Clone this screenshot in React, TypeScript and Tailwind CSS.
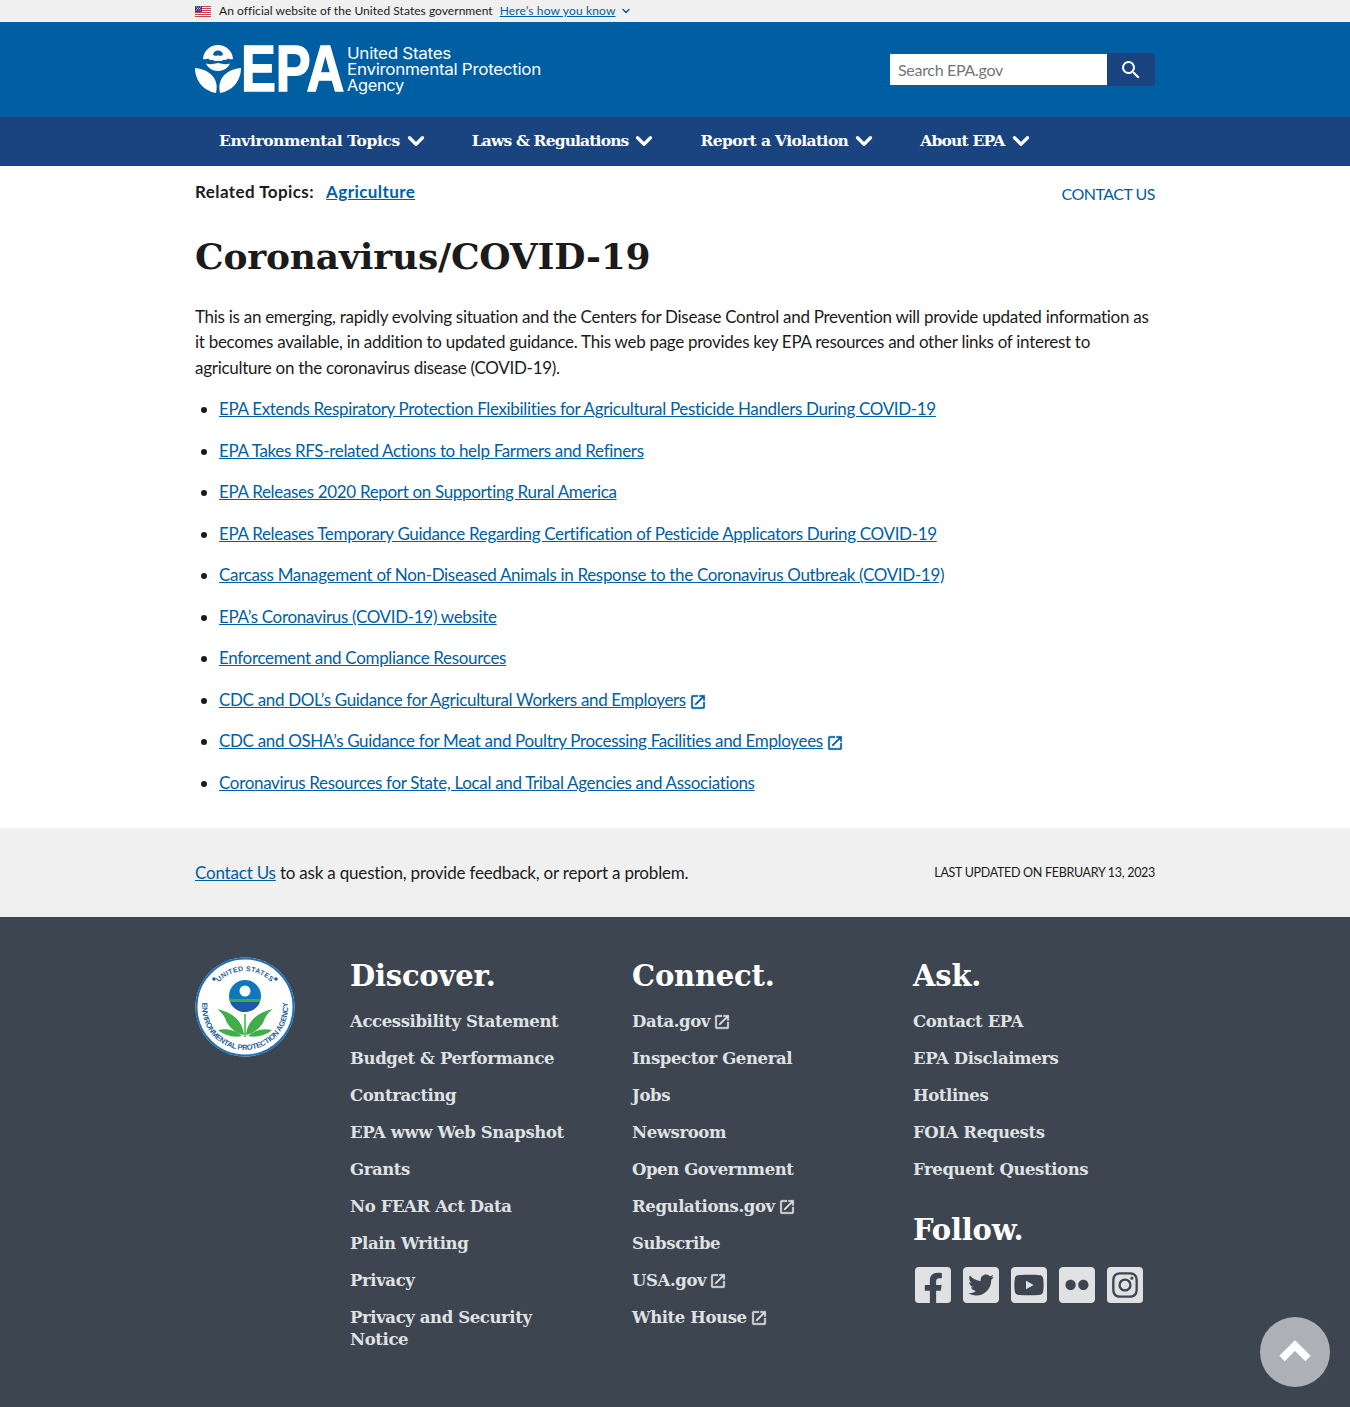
import { ChevronDown, ChevronUp } from 'lucide-react';
import { FaFacebookSquare, FaFlickr, FaInstagramSquare, FaTwitterSquare, FaYoutubeSquare } from 'react-icons/fa';
import { MdSearch } from 'react-icons/md';

const NAV_ITEMS = [
  { label: 'Environmental Topics', className: 'tracking-[-0.4px]' },
  { label: 'Laws & Regulations', className: 'tracking-[-0.85px]' },
  { label: 'Report a Violation', className: 'tracking-[-0.6px]' },
  { label: 'About EPA', className: 'tracking-[-0.8px]' },
];

const LINKS = [
  { label: 'EPA Extends Respiratory Protection Flexibilities for Agricultural Pesticide Handlers During COVID-19' },
  { label: 'EPA Takes RFS-related Actions to help Farmers and Refiners' },
  { label: 'EPA Releases 2020 Report on Supporting Rural America' },
  { label: 'EPA Releases Temporary Guidance Regarding Certification of Pesticide Applicators During COVID-19' },
  { label: 'Carcass Management of Non-Diseased Animals in Response to the Coronavirus Outbreak (COVID-19)' },
  { label: 'EPA’s Coronavirus (COVID-19) website' },
  { label: 'Enforcement and Compliance Resources' },
  { label: 'CDC and DOL’s Guidance for Agricultural Workers and Employers', external: true },
  { label: 'CDC and OSHA’s Guidance for Meat and Poultry Processing Facilities and Employees', external: true },
  { label: 'Coronavirus Resources for State, Local and Tribal Agencies and Associations' },
];

const DISCOVER = [
  { label: 'Accessibility Statement' },
  { label: 'Budget & Performance' },
  { label: 'Contracting' },
  { label: 'EPA www Web Snapshot' },
  { label: 'Grants' },
  { label: 'No FEAR Act Data' },
  { label: 'Plain Writing' },
  { label: 'Privacy' },
  { label: 'Privacy and Security Notice' },
];

const CONNECT = [
  { label: 'Data.gov', external: true },
  { label: 'Inspector General' },
  { label: 'Jobs' },
  { label: 'Newsroom' },
  { label: 'Open Government' },
  { label: 'Regulations.gov', external: true },
  { label: 'Subscribe' },
  { label: 'USA.gov', external: true },
  { label: 'White House', external: true },
];

const ASK = [
  { label: 'Contact EPA' },
  { label: 'EPA Disclaimers' },
  { label: 'Hotlines' },
  { label: 'FOIA Requests' },
  { label: 'Frequent Questions' },
];

type FooterLink = { label: string; external?: boolean };

function UsFlag() {
  return (
    <svg width="16" height="11" viewBox="0 0 16 11" className="shrink-0">
      <rect width="16" height="11" fill="#fff" />
      <path d="M0 .5h16M0 2.5h16M0 4.5h16M0 6.5h16M0 8.5h16M0 10.5h16" stroke="#c9434f" strokeWidth="1" />
      <rect width="7" height="6" fill="#3b3b80" />
      <path d="M1 1h1M3 1h1M5 1h1M2 2.5h1M4 2.5h1M1 4h1M3 4h1M5 4h1" stroke="#fff" strokeWidth=".7" />
    </svg>
  );
}

function LaunchIcon({ className }: { className: string }) {
  return (
    <svg viewBox="0 0 24 24" fill="currentColor" stroke="currentColor" strokeWidth=".5" className={className}>
      <path d="M19 19H5V5h7V3H5a2 2 0 0 0-2 2v14a2 2 0 0 0 2 2h14a2 2 0 0 0 2-2v-7h-2v7ZM14 3v2h3.590l-9.830 9.830 1.410 1.410L19 6.410V10h2V3h-7Z" />
    </svg>
  );
}

function EpaLogo() {
  return (
    <svg width="347" height="50" viewBox="0 0 347 50">
      {/* 花形标志 */}
      <path
        fill="#fff"
        d="M23 0a15 15 0 0 1 15 14c-2 .5-4 .2-5.500-.6-.8 1.400-2.500 2.100-4 1.300-1.400 1.300-3.600 1.600-5.500 1-1.900.6-4.100.3-5.500-1-1.500.8-3.200.1-4-1.300-1.500.8-3.500 1.100-5.500.6A15 15 0 0 1 23 0Zm0 5.500a5.200 5.200 0 0 0-5 4.500c1.500 1 3.400 1.100 5 .2 1.600.9 3.500.8 5-.2a5.200 5.200 0 0 0-5-4.500Z"
      />
      <path fill="#fff" d="M11 18.500c3.600 1 7.500.8 12-.5 4.500 1.300 8.400 1.500 12 .5-1.800 4.500-6.500 7.500-12 7.500s-10.200-3-12-7.500Z" />
      <path fill="#fff" d="M0 23c10 .5 20 6.500 21.500 16.500.4 3 0 6-.5 8.500C9 46 0 36 0 23Z" />
      <path fill="#fff" d="M46 23c-10 .5-20 6.500-21.500 16.500-.4 3 0 6 .5 8.500 12-2 21-12 21-25Z" />
      <text
        x="46"
        y="46"
        textLength="103"
        lengthAdjust="spacingAndGlyphs"
        fill="#fff"
        stroke="#fff"
        strokeWidth="1.400"
        fontFamily="Liberation Sans, sans-serif"
        fontWeight="700"
        fontSize="64"
      >
        EPA
      </text>
      <g fill="#fff" fontFamily="Inter, sans-serif" fontSize="16">
        <text x="152" y="14" textLength="104" lengthAdjust="spacingAndGlyphs">United States</text>
        <text x="152" y="30" textLength="194" lengthAdjust="spacingAndGlyphs">Environmental Protection</text>
        <text x="152" y="46" textLength="57" lengthAdjust="spacingAndGlyphs">Agency</text>
      </g>
    </svg>
  );
}

function EpaSeal() {
  return (
    <svg width="100" height="100" viewBox="0 0 100 100" className="shrink-0">
      <circle cx="50" cy="50" r="49.500" fill="#fff" />
      <circle cx="50" cy="50" r="48.500" fill="none" stroke="#1f6fb5" strokeWidth="2" />
      <defs>
        <path id="seal-top" d="M14 50a36 36 0 0 1 72 0" />
        <path id="seal-bottom" d="M11 31.800a43 43 0 1 0 78 0" />
        <clipPath id="seal-globe">
          <circle cx="50" cy="39" r="16" />
        </clipPath>
      </defs>
      <text fill="#1f5fa0" fontFamily="Liberation Sans, sans-serif" fontWeight="700" fontSize="7" letterSpacing=".3">
        <textPath href="#seal-top" startOffset="50%" textAnchor="middle">
          UNITED STATES
        </textPath>
      </text>
      <text fill="#1f5fa0" fontFamily="Liberation Sans, sans-serif" fontWeight="700" fontSize="7.600">
        <textPath href="#seal-bottom" startOffset="50%" textAnchor="middle">
          ENVIRONMENTAL PROTECTION AGENCY
        </textPath>
      </text>
      <circle cx="19" cy="22" r="1.800" fill="#1f5fa0" />
      <circle cx="81" cy="22" r="1.800" fill="#1f5fa0" />
      <g clipPath="url(#seal-globe)">
        <rect x="34" y="23" width="32" height="32" fill="#0f78bd" />
        <circle cx="50" cy="34" r="5.500" fill="#fff" />
        <rect x="34" y="42" width="32" height="3" fill="#3fae49" />
        <rect x="34" y="45" width="32" height="10" fill="#1b5aa6" />
      </g>
      <path d="M50 80V57" stroke="#3fae49" strokeWidth="1.500" />
      <path fill="#3fae49" d="M49 78c-1-13-11-23-27-26 3 2 6 5 8 9 2 7 10 16 19 17Z" />
      <path fill="#3fae49" d="M51 78c1-13 11-23 27-26-3 2-6 5-8 9-2 7-10 16-19 17Z" />
      <path fill="#3fae49" d="M47 79c-6-5-14-8-24-6 6 5 15 8 24 6Z" />
      <path fill="#3fae49" d="M53 79c6-5 14-8 24-6-6 5-15 8-24 6Z" />
    </svg>
  );
}

function FooterColumn({ title, links }: { title: string; links: FooterLink[] }) {
  return (
    <div className="pt-px">
      <h2 className="mb-[17px] text-[29px] leading-[36px] font-bold tracking-[-0.2px] text-white">{title}</h2>
      <ul className="flex flex-col gap-[15px]">
        {links.map((link) => (
          <li key={link.label} className="text-[16.500px] leading-[22px] font-bold tracking-[-0.4px] text-[#dfe1e2]">
            {link.label}
            {link.external && <LaunchIcon className="ml-[3px] inline h-[18px] w-[18px] align-[-4px]" />}
          </li>
        ))}
      </ul>
    </div>
  );
}

export default function App() {
  return (
    <div className="relative min-h-[1407px] bg-white text-[17px] leading-[25.500px] tracking-[-0.28px] text-[#1b1b1b] [font-family:Lato,sans-serif]">
      <div className="h-[22px] bg-[#f0f0f0]">
        <div className="mx-auto flex h-full w-[960px] items-center text-[12px] tracking-[0.04px]">
          <UsFlag />
          <span className="ml-2">An official website of the United States government</span>
          <a className="ml-[7px] tracking-[0.15px] text-[#005ea2] underline">Here’s how you know</a>
          <ChevronDown className="ml-1 h-3 w-3 text-[#005ea2]" strokeWidth={3} />
        </div>
      </div>

      <header className="h-[95px] bg-[#005ea2]">
        <div className="mx-auto flex h-full w-[960px] items-center justify-between">
          <EpaLogo />
          <div className="flex h-[33px] w-[265px] items-stretch">
            <div className="my-px flex flex-1 items-center bg-white px-2 text-[16px] tracking-[-0.3px] text-[#71767a]">Search EPA.gov</div>
            <button type="button" className="flex w-12 items-center justify-center rounded-r bg-[#1a4480] text-white">
              <MdSearch className="h-6 w-6" />
            </button>
          </div>
        </div>
      </header>

      <nav className="h-[49px] bg-[#1a4480]">
        <div className="mx-auto flex h-full w-[960px] items-center gap-[43px] pb-[2px] pl-6 text-[15.500px] font-bold text-white [font-family:'DejaVu_Serif',serif]">
          {NAV_ITEMS.map((item) => (
            <span key={item.label} className={`flex items-center gap-[3px] ${item.className}`}>
              {item.label}
              <ChevronDown className="h-[26px] w-[26px]" strokeWidth={3} />
            </span>
          ))}
        </div>
      </nav>

      <main className="mx-auto w-[960px]">
        <div className="flex items-start justify-between pt-[13px]">
          <div className="font-bold tracking-[0.42px]">
            Related Topics:
            <a className="ml-3 text-[#005ea2] underline">Agriculture</a>
          </div>
          <a className="pt-[2px] text-[16px] tracking-[-0.5px] text-[#005ea2] uppercase">Contact Us</a>
        </div>
        <h1 className="mt-[26px] text-[36px] leading-[46px] font-bold tracking-[-0.2px] [font-family:'DejaVu_Serif',serif]">Coronavirus/COVID-19</h1>
        <p className="mt-[25px]">
          This is an emerging, rapidly evolving situation and the Centers for Disease Control and Prevention will provide updated information as it becomes available, in addition to updated guidance. This web page provides key EPA resources and other links of interest to agriculture on the coronavirus disease (COVID-19).
        </p>
        <ul className="mt-4 list-disc pl-6 tracking-[-0.33px]">
          {LINKS.map((link) => (
            <li key={link.label} className="mb-4">
              <a className="text-[#005ea2] underline">{link.label}</a>
              {link.external && <LaunchIcon className="ml-[3px] inline h-[18px] w-[18px] align-[-5px] text-[#005ea2]" />}
            </li>
          ))}
        </ul>
      </main>

      <div className="mt-[33px] h-[89px] bg-[#f0f0f0]">
        <div className="mx-auto flex h-full w-[960px] items-center justify-between">
          <p className="tracking-[-0.2px]">
            <a className="text-[#005ea2] underline">Contact Us</a> to ask a question, provide feedback, or report a problem.
          </p>
          <p className="text-[12.500px] tracking-[-0.3px] uppercase">Last updated on February 13, 2023</p>
        </div>
      </div>

      <footer className="h-[490px] bg-[#3d4551] pt-10 [font-family:'DejaVu_Serif',serif]">
        <div className="mx-auto flex w-[960px]">
          <div className="w-[155px]">
            <EpaSeal />
          </div>
          <div className="w-[282px] pr-[50px]">
            <FooterColumn title="Discover." links={DISCOVER} />
          </div>
          <div className="w-[281px]">
            <FooterColumn title="Connect." links={CONNECT} />
          </div>
          <div>
            <FooterColumn title="Ask." links={ASK} />
            <h2 className="mt-[31px] text-[29px] leading-[36px] font-bold tracking-[-0.2px] text-white">Follow.</h2>
            <div className="mt-[16px] flex gap-3 pl-[2px] text-[#dfe1e2]">
              <FaFacebookSquare className="h-[42px] w-[36px]" />
              <FaTwitterSquare className="h-[42px] w-[36px]" />
              <FaYoutubeSquare className="h-[42px] w-[36px]" />
              <FaFlickr className="h-[42px] w-[36px]" />
              <FaInstagramSquare className="h-[42px] w-[36px]" />
            </div>
          </div>
        </div>
      </footer>

      <button type="button" className="absolute top-[1317px] right-[20px] flex h-[70px] w-[70px] items-center justify-center rounded-full bg-[#adb0b5] text-white">
        <ChevronUp className="h-[52px] w-[52px]" strokeWidth={3.500} strokeLinecap="butt" strokeLinejoin="miter" />
      </button>
    </div>
  );
}
